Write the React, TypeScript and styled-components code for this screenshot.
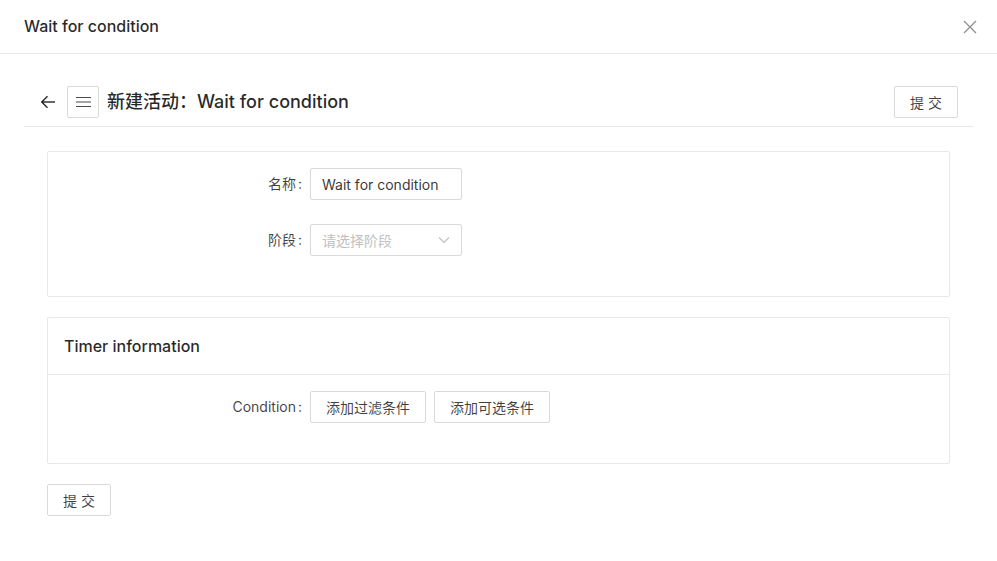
import React from 'react';
import styled, { createGlobalStyle } from 'styled-components';

const GlobalStyle = createGlobalStyle`
  html, body {
    margin: 0;
    padding: 0;
    background: #fff;
  }
  body {
    font-family: "Inter", "Noto Sans CJK SC", sans-serif;
    font-size: 14px;
    color: rgba(0, 0, 0, 0.65);
  }
  * {
    box-sizing: border-box;
  }
`;

// Modal header
const ModalHeader = styled.div`
  height: 54px;
  display: flex;
  align-items: center;
  justify-content: space-between;
  padding: 0 19px 0 24px;
  border-bottom: 1px solid #e8e8e8;
`;

const ModalTitle = styled.div`
  font-size: 16px;
  font-weight: 500;
  color: rgba(0, 0, 0, 0.85);
  margin-top: -1px;
`;

const CloseButton = styled.button`
  background: transparent;
  border: none;
  padding: 0;
  width: 16px;
  height: 16px;
  display: flex;
  align-items: center;
  justify-content: center;
  color: rgba(0, 0, 0, 0.45);
  cursor: pointer;
`;

// Page header
const PageHeader = styled.div`
  margin: 0 23px 0 24px;
  padding: 32px 16px 8px;
  border-bottom: 1px solid #e8e8e8;
  display: flex;
  align-items: center;
`;

const BackButton = styled.button`
  background: transparent;
  border: none;
  padding: 0;
  width: 16px;
  height: 32px;
  display: flex;
  align-items: center;
  color: rgba(0, 0, 0, 0.85);
  margin-right: 11px;
  cursor: pointer;
`;

const IconButton = styled.button`
  width: 32px;
  height: 32px;
  border: 1px solid #d9d9d9;
  border-radius: 2px;
  background: #fff;
  display: flex;
  align-items: center;
  justify-content: center;
  padding: 0;
  color: rgba(0, 0, 0, 0.7);
  margin-right: 8px;
  cursor: pointer;
`;

const PageTitle = styled.h1`
  margin: 0;
  flex: 1;
  font-size: 18px;
  font-weight: 500;
  color: rgba(0, 0, 0, 0.85);
  line-height: 32px;
`;

const Button = styled.button<{ $width?: number }>`
  height: 32px;
  padding: 0 15px;
  ${({ $width }) => ($width ? `width: ${$width}px;` : '')}
  border: 1px solid #d9d9d9;
  border-radius: 2px;
  background: #fff;
  font-family: inherit;
  font-size: 14px;
  color: rgba(0, 0, 0, 0.75);
  cursor: pointer;
  white-space: nowrap;
`;

// Content
const Content = styled.div`
  padding: 24px 47px 0;
  display: flex;
  flex-direction: column;
  align-items: stretch;
  gap: 20px;
`;

const Card = styled.section`
  border: 1px solid #e8e8e8;
  border-radius: 2px;
  background: #fff;
`;

const CardHead = styled.div`
  height: 57px;
  padding: 0 16px;
  display: flex;
  align-items: center;
  border-bottom: 1px solid #e8e8e8;
  font-size: 16px;
  font-weight: 500;
  color: rgba(0, 0, 0, 0.85);
`;

const CardBody = styled.div`
  padding: 16px 0 16px;
`;

const FormItem = styled.div`
  display: grid;
  grid-template-columns: 262px auto;
  align-items: center;
  margin-bottom: 24px;
`;

const Label = styled.label`
  text-align: right;
  color: rgba(0, 0, 0, 0.75);
  font-size: 14px;
  line-height: 32px;

  &::after {
    content: ':';
    margin: 0 8px 0 2px;
  }
`;

const Controls = styled.div`
  display: flex;
  gap: 8px;
`;

const Input = styled.input`
  width: 152px;
  height: 32px;
  padding: 4px 11px;
  border: 1px solid #d9d9d9;
  border-radius: 2px;
  font-family: inherit;
  font-size: 14px;
  color: rgba(0, 0, 0, 0.8);
  outline: none;
`;

const Select = styled.div`
  width: 152px;
  height: 32px;
  padding: 0 11px;
  border: 1px solid #d9d9d9;
  border-radius: 2px;
  display: flex;
  align-items: center;
  justify-content: space-between;
  color: #bfbfbf;
  font-size: 14px;
`;

const Footer = styled.div`
  display: flex;
`;

const ArrowLeft = () => (
  <svg width="16" height="16" viewBox="0 0 16 16" fill="none" stroke="currentColor" strokeWidth="1.4">
    <path d="M15 8H1.8" />
    <path d="M7.5 2.3L1.8 8l5.7 5.7" />
  </svg>
);

const MenuIcon = () => (
  <svg width="15" height="12" viewBox="0 0 15 12" fill="none" stroke="currentColor" strokeWidth="1.1">
    <path d="M0 1.5h15M0 6h15M0 10.5h15" />
  </svg>
);

const CloseIcon = () => (
  <svg width="14" height="14" viewBox="0 0 14 14" fill="none" stroke="currentColor" strokeWidth="1.2">
    <path d="M1 1l12 12M13 1L1 13" />
  </svg>
);

const ChevronDown = () => (
  <svg width="12" height="8" viewBox="0 0 12 8" fill="none" stroke="currentColor" strokeWidth="1.1">
    <path d="M1 1.5l5 5 5-5" />
  </svg>
);

export default function App() {
  return (
    <>
      <GlobalStyle />
      <ModalHeader>
        <ModalTitle>Wait for condition</ModalTitle>
        <CloseButton aria-label="close">
          <CloseIcon />
        </CloseButton>
      </ModalHeader>

      <PageHeader>
        <BackButton aria-label="back">
          <ArrowLeft />
        </BackButton>
        <IconButton aria-label="menu">
          <MenuIcon />
        </IconButton>
        <PageTitle>新建活动：Wait for condition</PageTitle>
        <Button>提 交</Button>
      </PageHeader>

      <Content>
        <Card>
          <CardBody>
            <FormItem>
              <Label>名称</Label>
              <Controls>
                <Input defaultValue="Wait for condition" />
              </Controls>
            </FormItem>
            <FormItem>
              <Label>阶段</Label>
              <Controls>
                <Select>
                  <span>请选择阶段</span>
                  <ChevronDown />
                </Select>
              </Controls>
            </FormItem>
          </CardBody>
        </Card>

        <Card>
          <CardHead>Timer information</CardHead>
          <CardBody>
            <FormItem>
              <Label>Condition</Label>
              <Controls>
                <Button $width={116}>添加过滤条件</Button>
                <Button $width={116}>添加可选条件</Button>
              </Controls>
            </FormItem>
          </CardBody>
        </Card>

        <Footer>
          <Button $width={64}>提 交</Button>
        </Footer>
      </Content>
    </>
  );
}
